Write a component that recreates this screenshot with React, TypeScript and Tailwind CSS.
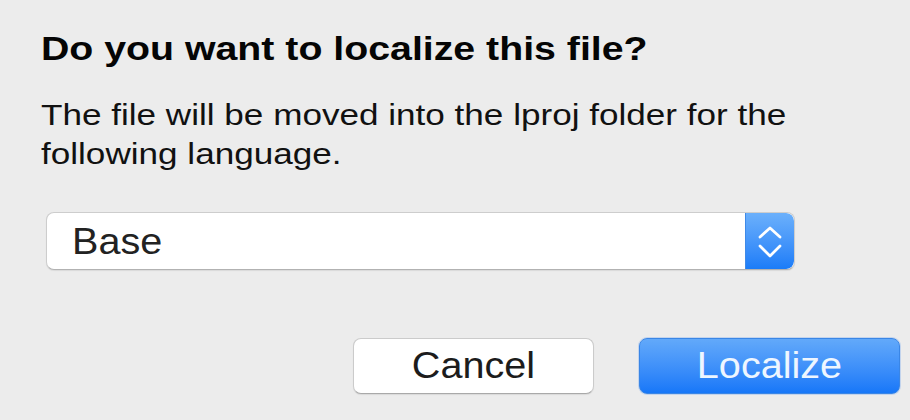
import React from "react";

const font = { fontFamily: '"Liberation Sans", Arial, Helvetica, sans-serif' };

function Stepper() {
  return (
    <div className="w-[49px] h-full rounded-r-[8px] bg-gradient-to-b from-[#6bb0fb] to-[#1a7cf8] border-l border-[#3f8ae8]">
      <svg width="48" height="57" viewBox="0 0 48 57" fill="none">
        <path
          d="M14 24 L24 15 L34 24"
          stroke="#ffffff"
          strokeWidth="2.75"
          strokeLinecap="round"
          strokeLinejoin="round"
        />
        <path
          d="M14 33 L24 43 L34 33"
          stroke="#ffffff"
          strokeWidth="2.75"
          strokeLinecap="round"
          strokeLinejoin="round"
        />
      </svg>
    </div>
  );
}

export default function App() {
  return (
    <div className="w-[910px] h-[420px] bg-[#ececec] overflow-hidden" style={font}>
      <div className="pl-[41px] pt-[28px]">
        {/* 제목 */}
        <div className="text-[34px] leading-[40px] font-bold text-[#050505] origin-left scale-x-[1.155] whitespace-nowrap">
          Do you want to localize this file?
        </div>

        {/* 설명 */}
        <div className="mt-[27px] text-[30px] leading-[39px] text-[#111111] origin-left scale-x-[1.17] whitespace-nowrap">
          <div>The file will be moved into the lproj folder for the</div>
          <div>following language.</div>
        </div>
      </div>

      {/* 언어 선택 */}
      <div className="ml-[46px] mt-[39px] w-[749px] h-[58px] flex rounded-[8px] bg-white border border-[#cdcdcd] border-b-[#b2b2b2] shadow-[0_1px_1px_rgba(0,0,0,0.08)] overflow-hidden">
        <div className="flex-1 pl-[25px] pt-[1px] text-[36px] leading-[55px] text-[#222222]">
          <div className="origin-left scale-x-[1.1]">Base</div>
        </div>
        <Stepper />
      </div>

      {/* 버튼 */}
      <div className="mt-[68px] flex justify-end gap-[45px] pr-[10px]">
        <button className="w-[241px] h-[56px] rounded-[8px] bg-white border border-[#cbcbcb] border-b-[#a9a9a9] shadow-[0_1px_1px_rgba(0,0,0,0.08)] text-[36px] leading-[54px] text-[#1c1c1c]">
          <div className="scale-x-[1.1]">Cancel</div>
        </button>
        <button className="w-[261px] h-[56px] rounded-[8px] bg-gradient-to-b from-[#62a9fa] to-[#1677f8] border border-[#3a86e6] shadow-[0_0_0_1px_rgba(120,170,240,0.35)] text-[36px] leading-[54px] text-[#eef6ff]">
          <div className="scale-x-[1.1]">Localize</div>
        </button>
      </div>
    </div>
  );
}
